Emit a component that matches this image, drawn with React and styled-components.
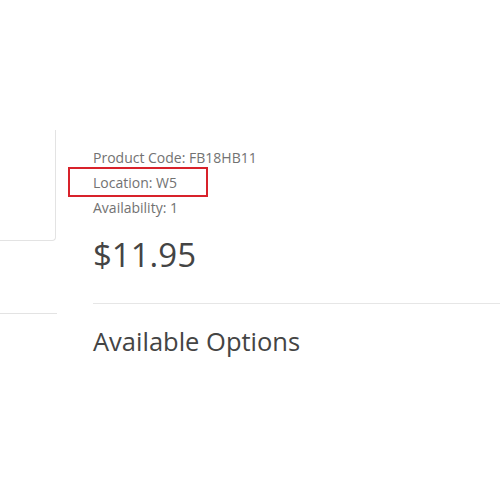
import React from "react";
import styled, { createGlobalStyle } from "styled-components";

const Global = createGlobalStyle`
  html, body { margin: 0; padding: 0; background: #fff; }
  body { font-family: "Open Sans", "Liberation Sans", sans-serif; }
`;

const Page = styled.div`
  width: 500px;
  height: 500px;
  display: flex;
  overflow: hidden;
  background: #fff;
`;

const LeftCol = styled.div`
  width: 57px;
  flex: none;
  padding-top: 130px;
  display: flex;
  flex-direction: column;
`;

const ImageCard = styled.div`
  width: 55px;
  height: 110px;
  border-right: 1px solid #e3e3e3;
  border-bottom: 1px solid #e3e3e3;
  border-bottom-right-radius: 4px;
`;

const LeftRule = styled.div`
  margin-top: 72px;
  height: 1px;
  background: #e3e3e3;
`;

const RightCol = styled.div`
  flex: 1;
  padding-left: 36px;
  padding-top: 145px;
  display: flex;
  flex-direction: column;
`;

const InfoList = styled.ul`
  list-style: none;
  margin: 0;
  padding: 0;
`;

const InfoItem = styled.li`
  position: relative;
  font-size: 14px;
  line-height: 25px;
  color: #727272;
`;

const Highlight = styled.span`
  position: absolute;
  left: -25px;
  top: -3px;
  width: 136px;
  height: 26px;
  border: 2px solid #d8222b;
`;

const Price = styled.h2`
  margin: 12px 0 0;
  font-size: 33px;
  line-height: 46px;
  font-weight: 400;
  color: #444;
`;

const Rule = styled.hr`
  margin: 25px 0 0;
  border: 0;
  border-top: 1px solid #e6e6e6;
`;

const OptionsTitle = styled.h3`
  margin: 19px 0 0;
  font-size: 25.5px;
  line-height: 36px;
  font-weight: 400;
  color: #444;
`;

export default function App() {
  return (
    <Page>
      <Global />
      <LeftCol>
        <ImageCard />
        <LeftRule />
      </LeftCol>
      <RightCol>
        <InfoList>
          <InfoItem>Product Code: FB18HB11</InfoItem>
          <InfoItem>
            <Highlight />
            Location: W5
          </InfoItem>
          <InfoItem>Availability: 1</InfoItem>
        </InfoList>
        <Price>$11.95</Price>
        <Rule />
        <OptionsTitle>Available Options</OptionsTitle>
      </RightCol>
    </Page>
  );
}
